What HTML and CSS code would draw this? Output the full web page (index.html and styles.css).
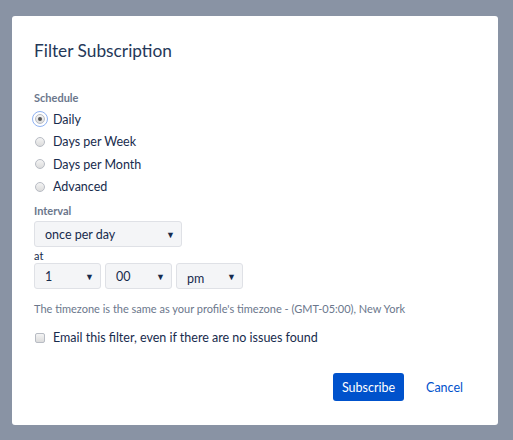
FILE: index.html
```html
<!DOCTYPE html>
<html>
<head>
<meta charset="utf-8">
<link rel="stylesheet" href="styles.css">
</head>
<body>
<div class="dialog">
  <h2 class="title">Filter Subscription</h2>
  <div class="group">
    <div class="label">Schedule</div>
    <div class="radios">
      <div class="radio focused"><span class="dot checked"></span><span>Daily</span></div>
      <div class="radio"><span class="dot"></span><span>Days per Week</span></div>
      <div class="radio"><span class="dot"></span><span>Days per Month</span></div>
      <div class="radio"><span class="dot"></span><span>Advanced</span></div>
    </div>
  </div>
  <div class="label interval-label">Interval</div>
  <div class="select wide"><span>once per day</span><span class="arrow">▼</span></div>
  <div class="at">at</div>
  <div class="selects">
    <div class="select s1"><span>1</span><span class="arrow">▼</span></div>
    <div class="select s2"><span>00</span><span class="arrow">▼</span></div>
    <div class="select s3"><span class="pm">pm</span><span class="arrow">▼</span></div>
  </div>
  <div class="tz">The timezone is the same as your profile's timezone - (GMT-05:00), New York</div>
  <div class="check"><span class="box"></span><span>Email this filter, even if there are no issues found</span></div>
  <div class="buttons">
    <button class="primary">Subscribe</button>
    <a class="cancel">Cancel</a>
  </div>
</div>
</body>
</html>
```
FILE: styles.css
```css
html, body {
  margin: 0;
  padding: 0;
  background: #8993a4;
  width: 513px;
  height: 440px;
  overflow: hidden;
}
body {
  font-family: "Lato", "Open Sans", sans-serif;
  color: #172b4d;
}
.dialog {
  box-sizing: border-box;
  margin: 16px 0 0 12px;
  width: 486px;
  height: 409px;
  background: #fff;
  border-radius: 3px;
  padding: 23px 22px 0 22px;
  display: flex;
  flex-direction: column;
}
.title {
  margin: 0;
  font-size: 17.3px;
  font-weight: 400;
  line-height: 24px;
  color: #253858;
}
.group {
  margin-top: 28px;
  display: flex;
  flex-direction: column;
}
.radios {
  margin-top: 3px;
  display: flex;
  flex-direction: column;
}
.label {
  font-size: 11px;
  font-weight: 700;
  color: #6b778c;
  line-height: 14px;
}
.radio {
  display: flex;
  align-items: center;
  font-size: 12.5px;
  height: 22.5px;
  gap: 8px;
  position: relative;
}
.dot {
  box-sizing: border-box;
  width: 10px;
  height: 10px;
  border-radius: 50%;
  border: 1px solid #b8bcc4;
  background: linear-gradient(#f4f4f4, #dcdcdc);
  position: relative;
  margin-left: 1px;
}
.dot.checked::after {
  content: "";
  position: absolute;
  left: 2px;
  top: 2px;
  width: 4px;
  height: 4px;
  border-radius: 50%;
  background: #555;
}
.focused .dot {
  outline: 1px solid #8fb2f2;
  outline-offset: 2px;
  box-shadow: 0 0 0 1px #fff;
}
.interval-label {
  margin-top: 6px;
}
.select {
  box-sizing: border-box;
  display: flex;
  align-items: center;
  justify-content: space-between;
  height: 26px;
  background: #f4f5f7;
  border: 1px solid #dfe1e6;
  border-radius: 3px;
  padding: 0 6px 0 10px;
  font-size: 12.5px;
  color: #172b4d;
}
.wide {
  width: 148px;
  margin-top: 3px;
}
.arrow {
  font-size: 9px;
  color: #172b4d;
}
.at {
  font-size: 11px;
  line-height: 14px;
  color: #172b4d;
  margin-top: 2px;
}
.selects {
  display: flex;
  gap: 4px;
}
.s1, .s2, .s3 { width: 67px; }
.pm { padding-top: 4px; }
.tz {
  margin-top: 13px;
  font-size: 11px;
  color: #6b778c;
  line-height: 14px;
}
.check {
  display: flex;
  align-items: center;
  gap: 8px;
  margin-top: 14px;
  font-size: 12.5px;
}
.box {
  box-sizing: border-box;
  width: 10px;
  height: 10px;
  margin-left: 1px;
  border: 1px solid #b8bcc4;
  border-radius: 2px;
  background: linear-gradient(#f4f4f4, #dcdcdc);
}
.buttons {
  display: flex;
  justify-content: flex-end;
  align-items: center;
  margin-top: 28px;
}
.primary {
  font-family: inherit;
  background: #0052cc;
  color: #fff;
  border: 0;
  border-radius: 3px;
  height: 28px;
  padding: 0 9px;
  font-size: 12.5px;
}
.cancel {
  color: #0052cc;
  font-size: 12.5px;
  margin-left: 22px;
  margin-right: 13px;
}
```
